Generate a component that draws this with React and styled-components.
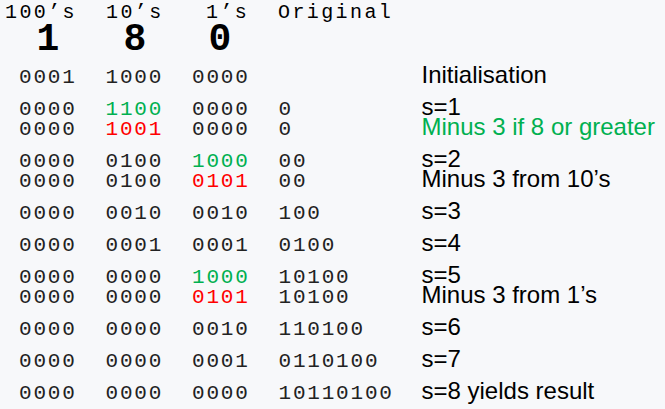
import React from "react";
import styled, { createGlobalStyle } from "styled-components";

const GlobalStyle = createGlobalStyle`
  html, body {
    margin: 0;
    padding: 0;
    background: #f7f8fa;
  }
`;

const Page = styled.div`
  width: 665px;
  height: 409px;
  overflow: hidden;
  background: #f7f8fa;
  color: #111;
`;

const HeaderRow = styled.div`
  display: grid;
  grid-template-columns: 101px 100px 72px auto;
  padding: 3px 0 0 5px;
  font-family: "Liberation Mono", "Courier New", monospace;
  font-size: 20px;
  letter-spacing: 2.4px;
  line-height: 20px;
  color: #000;
`;

const BigDigits = styled.div`
  display: flex;
  margin-top: 2px;
  font-family: "Liberation Mono", "Courier New", monospace;
  font-weight: bold;
  font-size: 38px;
  line-height: 30px;
  color: #000;
`;

const BigDigit = styled.span`
  display: block;
  width: ${(p) => p.$w}px;
  text-align: center;
`;

const Table = styled.div`
  display: flex;
  flex-direction: column;
  gap: 12px;
  margin-top: 10px;
`;

const Group = styled.div`
  display: flex;
  flex-direction: column;
`;

const Row = styled.div`
  display: grid;
  grid-template-columns: 86.5px 86.5px 86.5px 143px 1fr;
  grid-auto-rows: 20px;
  align-items: baseline;
  padding-left: 19px;
`;

const toneColor = {
  plain: "#222",
  green: "#00b050",
  red: "#ff0000",
};

const Bits = styled.span`
  font-family: "Liberation Mono", "Courier New", monospace;
  font-size: 21px;
  letter-spacing: 1.8px;
  line-height: 20px;
  white-space: pre;
  color: ${(p) => toneColor[p.$tone]};
`;

const Label = styled.span`
  font-family: "Liberation Sans", Arial, sans-serif;
  font-size: 24px;
  line-height: 20px;
  white-space: nowrap;
  color: ${(p) => (p.$tone === "green" ? toneColor.green : "#000")};
`;

const g = (t) => ({ t, tone: "green" });
const r = (t) => ({ t, tone: "red" });

const groups = [
  [["0001", "1000", "0000", "", "Initialisation"]],
  [
    ["0000", g("1100"), "0000", "0", "s=1"],
    ["0000", r("1001"), "0000", "0", g("Minus 3 if 8 or greater")],
  ],
  [
    ["0000", "0100", g("1000"), "00", "s=2"],
    ["0000", "0100", r("0101"), "00", "Minus 3 from 10’s"],
  ],
  [["0000", "0010", "0010", "100", "s=3"]],
  [["0000", "0001", "0001", "0100", "s=4"]],
  [
    ["0000", "0000", g("1000"), "10100", "s=5"],
    ["0000", "0000", r("0101"), "10100", "Minus 3 from 1’s"],
  ],
  [["0000", "0000", "0010", "110100", "s=6"]],
  [["0000", "0000", "0001", "0110100", "s=7"]],
  [["0000", "0000", "0000", "10110100", "s=8 yields result"]],
];

const cell = (c) => (typeof c === "string" ? { t: c, tone: "plain" } : c);

export default function App() {
  return (
    <Page>
      <GlobalStyle />
      <HeaderRow>
        <span>100’s</span>
        <span>10’s</span>
        <span>1’s</span>
        <span>Original</span>
      </HeaderRow>
      <BigDigits>
        <BigDigit $w={96}>1</BigDigit>
        <BigDigit $w={78}>8</BigDigit>
        <BigDigit $w={92}>0</BigDigit>
      </BigDigits>
      <Table>
        {groups.map((rows, gi) => (
          <Group key={gi}>
            {rows.map((row, ri) => {
              const label = cell(row[4]);
              return (
                <Row key={ri}>
                  {row.slice(0, 4).map((c, ci) => {
                    const b = cell(c);
                    return (
                      <Bits key={ci} $tone={b.tone}>
                        {b.t}
                      </Bits>
                    );
                  })}
                  <Label $tone={label.tone}>{label.t}</Label>
                </Row>
              );
            })}
          </Group>
        ))}
      </Table>
    </Page>
  );
}
